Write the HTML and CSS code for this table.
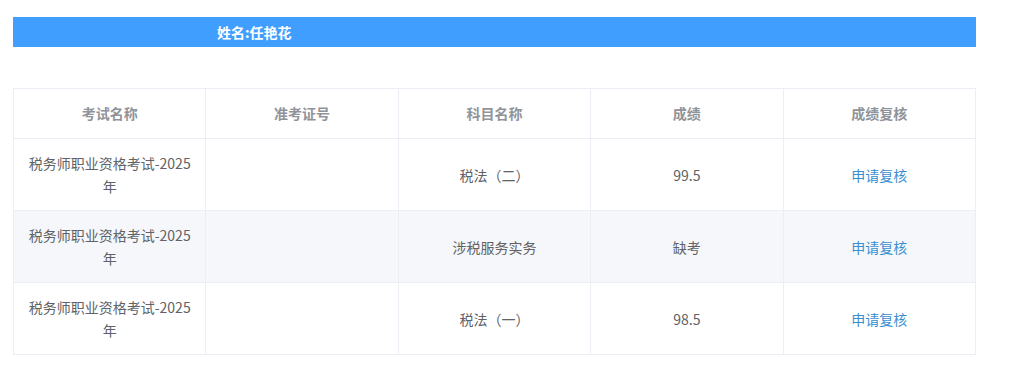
FILE: index.html
```html
<!DOCTYPE html>
<html lang="zh-CN">
<head>
<meta charset="utf-8">
<title>成绩查询</title>
<link rel="stylesheet" href="styles.css">
</head>
<body>
<div class="page">
  <div class="name-bar"><span class="name">姓名:任艳花</span></div>
  <table class="score-table">
    <thead>
      <tr>
        <th>考试名称</th>
        <th>准考证号</th>
        <th>科目名称</th>
        <th>成绩</th>
        <th>成绩复核</th>
      </tr>
    </thead>
    <tbody>
      <tr>
        <td>税务师职业资格考试-2025年</td>
        <td></td>
        <td>税法（二）</td>
        <td>99.5</td>
        <td><a class="review" href="#">申请复核</a></td>
      </tr>
      <tr class="striped">
        <td>税务师职业资格考试-2025年</td>
        <td></td>
        <td>涉税服务实务</td>
        <td>缺考</td>
        <td><a class="review" href="#">申请复核</a></td>
      </tr>
      <tr>
        <td>税务师职业资格考试-2025年</td>
        <td></td>
        <td>税法（一）</td>
        <td>98.5</td>
        <td><a class="review" href="#">申请复核</a></td>
      </tr>
    </tbody>
  </table>
</div>
</body>
</html>
```

FILE: styles.css
```css
* { box-sizing: border-box; }
html, body { margin: 0; padding: 0; background: #ffffff; }
body {
  font-family: "Noto Sans CJK SC", "Microsoft YaHei", sans-serif;
  font-size: 14px;
  color: #606266;
}
.page {
  padding: 17px 0 0 13px;
  width: 976px;
}
.name-bar {
  background: #409eff;
  height: 30px;
  line-height: 30px;
  padding-left: 204px;
  margin-bottom: 41px;
}
.name {
  color: #ffffff;
  font-weight: bold;
  font-size: 14px;
}
.score-table {
  width: 963px;
  border-collapse: collapse;
  table-layout: fixed;
  border: 1px solid #ebeef5;
}
.score-table th,
.score-table td {
  border: 1px solid #ebeef5;
  text-align: center;
  vertical-align: middle;
  line-height: 23px;
}
.score-table th {
  color: #909399;
  font-weight: bold;
  padding: 13px 10px 13px;
}
.score-table td {
  padding: 13px 10px 12px;
  height: 72px;
}
.score-table tr.striped td {
  background: #f5f7fa;
}
.review {
  color: #3a8fd0;
  text-decoration: none;
}
```
